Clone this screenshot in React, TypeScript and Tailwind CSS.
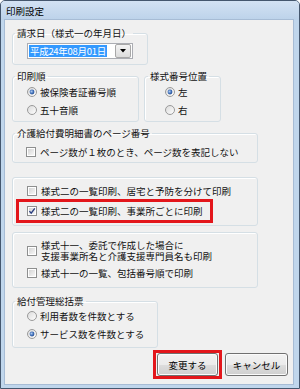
import React from "react";

function Radio({ checked }: { checked?: boolean }) {
  return (
    <svg width="10" height="10" viewBox="0 0 10 10" className="shrink-0">
      <defs>
        <linearGradient id="rg" x1="0" y1="0" x2="1" y2="1">
          <stop offset="0" stopColor="#d9d9d9" />
          <stop offset="1" stopColor="#ffffff" />
        </linearGradient>
        <radialGradient id="rd" cx="0.4" cy="0.4" r="0.7">
          <stop offset="0" stopColor="#a9c6ee" />
          <stop offset="0.6" stopColor="#3b6bb5" />
          <stop offset="1" stopColor="#1c3f7c" />
        </radialGradient>
      </defs>
      <circle cx="5" cy="5" r="4.5" fill="url(#rg)" stroke="#9a9a9a" strokeWidth="1" />
      {checked && <circle cx="5" cy="5" r="2.4" fill="url(#rd)" />}
    </svg>
  );
}

function Check({ checked }: { checked?: boolean }) {
  return (
    <svg width="10" height="10" viewBox="0 0 10 10" className="shrink-0">
      <defs>
        <linearGradient id="cg" x1="0" y1="0" x2="1" y2="1">
          <stop offset="0" stopColor="#d4d4d4" />
          <stop offset="1" stopColor="#f7f7f7" />
        </linearGradient>
      </defs>
      <rect x="0.5" y="0.5" width="9" height="9" fill="#ffffff" stroke="#8e8f8f" />
      <rect x="2" y="2" width="6" height="6" fill="url(#cg)" />
      {checked && (
        <path d="M2.4 5.1 L4.2 7.2 L7.8 2.4" stroke="#2c4080" strokeWidth="1.4" fill="none" />
      )}
    </svg>
  );
}

function RadioRow({ checked, label }: { checked?: boolean; label: string }) {
  return (
    <div className="flex h-[14px] items-center gap-[3px]">
      <Radio checked={checked} />
      <span className="whitespace-nowrap">{label}</span>
    </div>
  );
}

function CheckRow({ checked, label }: { checked?: boolean; label: string }) {
  return (
    <div className="flex h-[14px] items-center gap-[4px]">
      <Check checked={checked} />
      <span className="whitespace-nowrap">{label}</span>
    </div>
  );
}

export default function App() {
  return (
    <div className="w-[300px] h-[389px] flex flex-col rounded-t-[5px] border border-[#45576e] bg-[#c0d6ec] font-['Noto_Sans_CJK_JP','Noto_Sans',sans-serif] text-[9.5px] leading-[12px] text-[#111]">
      {/* title bar */}
      <div className="flex h-[19px] shrink-0 items-center rounded-t-[4px] bg-[linear-gradient(#d3e2f3,#bcd2ea)] pl-[5px] text-[9.5px] text-black">
        印刷設定
      </div>

      {/* client */}
      <div className="ml-[4px] mr-[6px] h-[364px] shrink-0 bg-[#f0f0f0] px-[7px] pt-[7px] shadow-[0_0_0_1px_#a7bcd5]">
        {/* 請求日 */}
        <fieldset className="w-[136px] rounded-[3px] border border-[#d5dfe5] shadow-[inset_1px_1px_0_#fff]">
          <legend className="ml-[2px] px-[2px] leading-[12px]">請求日（様式一の年月日）</legend>
          <div className="mb-[5px] ml-[14px] mt-[4px] flex h-[16px] w-[106px] items-center border border-[#abadb3] bg-white pl-[1px]">
            <span className="flex h-[12px] items-center whitespace-nowrap bg-[#3399ff] px-[1px] tracking-[-0.3px] text-white">
              平成24年08月01日
            </span>
            <div className="ml-auto mr-[1px] flex h-[14px] w-[16px] items-center justify-center rounded-[2px] border border-[#a8a8a8] bg-[linear-gradient(#f4f4f4,#dcdcdc)]">
              <svg width="6" height="4" viewBox="0 0 6 4">
                <path d="M0 0 H6 L3 3.5 Z" fill="#000" />
              </svg>
            </div>
          </div>
        </fieldset>

        {/* 印刷順 / 様式番号位置 */}
        <div className="mt-[5px] flex gap-[5px]">
          <fieldset className="w-[127px] rounded-[3px] border border-[#d5dfe5] pb-[4px] pl-[14px] shadow-[inset_1px_1px_0_#fff]">
            <legend className="-ml-[12px] px-[2px] leading-[12px]">印刷順</legend>
            <div className="mt-[3px]">
              <RadioRow checked label="被保険者証番号順" />
            </div>
            <div className="mt-[4px]">
              <RadioRow label="五十音順" />
            </div>
          </fieldset>
          <fieldset className="w-[77px] rounded-[3px] border border-[#d5dfe5] pb-[4px] pl-[20px] shadow-[inset_1px_1px_0_#fff]">
            <legend className="-ml-[17px] px-[2px] leading-[12px]">様式番号位置</legend>
            <div className="mt-[3px]">
              <RadioRow checked label="左" />
            </div>
            <div className="mt-[4px]">
              <RadioRow label="右" />
            </div>
          </fieldset>
        </div>

        {/* ページ番号 */}
        <fieldset className="mt-[5px] w-[246px] rounded-[3px] border border-[#d5dfe5] pb-[3px] pl-[13px] shadow-[inset_1px_1px_0_#fff]">
          <legend className="-ml-[11px] px-[2px] leading-[12px]">介護給付費明細書のページ番号</legend>
          <div className="mt-[6px]">
            <CheckRow label="ページ数が１枚のとき、ページ数を表記しない" />
          </div>
        </fieldset>

        {/* 様式二 */}
        <div className="mt-[14px] w-[246px] rounded-[3px] border border-[#d5dfe5] pb-[2px] pt-[6px] shadow-[inset_1px_1px_0_#fff]">
          <div className="pl-[14px]">
            <CheckRow label="様式二の一覧印刷、居宅と予防を分けて印刷" />
          </div>
          <div className="ml-[3px] mt-[1px] w-[197px] border-[3px] border-[#e3161b] py-[2px] pl-[8px]">
            <CheckRow checked label="様式二の一覧印刷、事業所ごとに印刷" />
          </div>
        </div>

        {/* 様式十一 */}
        <div className="mt-[6px] w-[246px] rounded-[3px] border border-[#d5dfe5] pb-[7px] pl-[14px] pt-[7px] shadow-[inset_1px_1px_0_#fff]">
          <div className="flex h-[22px] items-center gap-[4px]">
            <Check />
            <div className="flex flex-col">
              <div className="h-[11px] whitespace-nowrap leading-[11px]">様式十一、委託で作成した場合に</div>
              <div className="h-[11px] whitespace-nowrap leading-[11px]">支援事業所名と介護支援専門員名も印刷</div>
            </div>
          </div>
          <div className="mt-[4px]">
            <CheckRow label="様式十一の一覧、包括番号順で印刷" />
          </div>
        </div>

        {/* 給付管理総括票 */}
        <fieldset className="mt-[7px] w-[146px] rounded-[3px] border border-[#d5dfe5] pb-[6px] pl-[14px] shadow-[inset_1px_1px_0_#fff]">
          <legend className="-ml-[12px] px-[2px] leading-[12px]">給付管理総括票</legend>
          <div className="mt-[2px]">
            <RadioRow label="利用者数を件数とする" />
          </div>
          <div className="mt-[4px]">
            <RadioRow checked label="サービス数を件数とする" />
          </div>
        </fieldset>

        {/* buttons */}
        <div className="-mr-[2px] mt-[2px] flex items-center justify-end gap-[3px]">
          <div className="border-[3px] border-[#e3161b] px-[1px]">
            <button className="flex h-[23px] w-[61px] items-center justify-center rounded-[3px] border border-[#707070] bg-[linear-gradient(#f2f2f2_0%,#ebebeb_50%,#dddddd_51%,#cfcfcf_100%)] text-[9.5px] text-black shadow-[inset_0_0_0_1px_#fbfbfb]">
              変更する
            </button>
          </div>
          <button className="flex h-[23px] w-[63px] items-center justify-center rounded-[3px] border border-[#707070] bg-[linear-gradient(#f2f2f2_0%,#ebebeb_50%,#dddddd_51%,#cfcfcf_100%)] text-[9.5px] text-black shadow-[inset_0_0_0_1px_#fbfbfb]">
            キャンセル
          </button>
        </div>
      </div>
    </div>
  );
}
